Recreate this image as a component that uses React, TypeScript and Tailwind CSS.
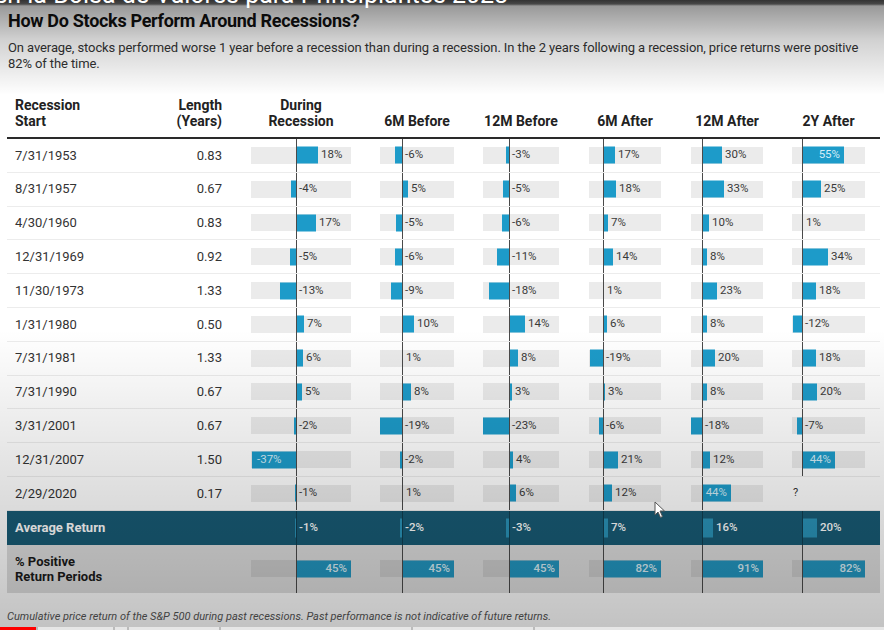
import React from 'react';

// Interfaces
interface IColumn {
  title: string[];
  cls: string;
  width: number;
  zero: number;
  scale: number;
}

interface IRecession {
  start: string;
  length: string;
  values: (number | null)[];
  inside?: number[];
}

interface IBarCellProps {
  column: IColumn;
  value: number | null;
  inside?: boolean;
  variant: 'row' | 'average' | 'positive';
}

// Constants
const columns: IColumn[] = [
  { title: ['During', 'Recession'], cls: 'ml-[29px] w-[100px]', width: 100, zero: 45, scale: 1.2 },
  { title: ['6M Before'], cls: 'ml-[29px] w-[74px]', width: 74, zero: 22, scale: 1.17 },
  { title: ['12M Before'], cls: 'ml-[29px] w-[76px]', width: 76, zero: 26, scale: 1.12 },
  { title: ['6M After'], cls: 'ml-[30px] w-[72px]', width: 72, zero: 14, scale: 0.71 },
  { title: ['12M After'], cls: 'ml-[30px] w-[72px]', width: 72, zero: 11, scale: 0.67 },
  { title: ['2Y After'], cls: 'ml-[29px] w-[73px]', width: 73, zero: 10, scale: 0.76 },
];

const recessions: IRecession[] = [
  { start: '7/31/1953', length: '0.83', values: [18, -6, -3, 17, 30, 55], inside: [5] },
  { start: '8/31/1957', length: '0.67', values: [-4, 5, -5, 18, 33, 25] },
  { start: '4/30/1960', length: '0.83', values: [17, -5, -6, 7, 10, 1] },
  { start: '12/31/1969', length: '0.92', values: [-5, -6, -11, 14, 8, 34] },
  { start: '11/30/1973', length: '1.33', values: [-13, -9, -18, 1, 23, 18] },
  { start: '1/31/1980', length: '0.50', values: [7, 10, 14, 6, 8, -12] },
  { start: '7/31/1981', length: '1.33', values: [6, 1, 8, -19, 20, 18] },
  { start: '7/31/1990', length: '0.67', values: [5, 8, 3, 3, 8, 20] },
  { start: '3/31/2001', length: '0.67', values: [-2, -19, -23, -6, -18, -7] },
  { start: '12/31/2007', length: '1.50', values: [-37, -2, 4, 21, 12, 44], inside: [0, 5] },
  { start: '2/29/2020', length: '0.17', values: [-1, 1, 6, 12, 44, null], inside: [4] },
];

const averages = [-1, -2, -3, 7, 16, 20];
const positives = [45, 45, 45, 82, 91, 82];

const BarCell: React.FunctionComponent<IBarCellProps> = ({
  column,
  value,
  inside,
  variant,
}): JSX.Element => {
  if (value === null) {
    return (
      <div className={`relative flex h-full items-center ${column.cls}`}>
        <span className="pl-px text-[11px] text-[#333]">?</span>
      </div>
    );
  }

  const size = Math.max(1, Math.round(Math.abs(value) * column.scale));
  let left = value >= 0 ? column.zero : Math.max(0, column.zero - size);
  let width = value >= 0 ? Math.min(size, column.width - column.zero) : column.zero - left;

  if (variant === 'positive') {
    left = column.zero;
    width = column.width - column.zero;
  }

  let labelStyle: React.CSSProperties;
  if (variant === 'positive' || (inside && value > 0)) {
    labelStyle = { right: column.width - (left + width) + 4 };
  } else if (inside) {
    labelStyle = { left: left + 5 };
  } else if (value > 0) {
    labelStyle = { left: column.zero + width + 3 };
  } else {
    labelStyle = { left: column.zero + 3 };
  }

  const labelColor =
    variant === 'average'
      ? 'font-medium text-white'
      : variant === 'positive'
        ? 'font-medium text-[#d9eef6]'
        : inside
          ? 'text-[#d4edf7]'
          : 'text-[#3a3a3a]';

  return (
    <div className={`relative flex h-full items-center ${column.cls}`}>
      {/* Track */}
      {variant !== 'average' && (
        <div
          className={`h-[17px] w-full ${variant === 'positive' ? 'bg-[#cdcdcd]' : 'bg-[#ebebeb]'}`}
        />
      )}

      {/* Bar */}
      <div
        className={`absolute top-1/2 -translate-y-1/2 ${
          variant === 'average'
            ? 'h-[19px] bg-[#2a93b8]'
            : variant === 'positive'
              ? 'h-[17px] bg-[#2396c0]'
              : 'h-[17px] bg-[#1d9bc9]'
        }`}
        style={{ left, width }}
      />

      {/* Zero line */}
      <div
        className={`absolute inset-y-0 w-px ${variant === 'average' ? 'bg-[#0f3e50]' : 'bg-[#4a4a4a]'}`}
        style={{ left: column.zero }}
      />

      {/* Label */}
      <span
        className={`absolute top-1/2 -translate-y-1/2 text-[11.5px] leading-none ${labelColor}`}
        style={labelStyle}
      >
        {value}%
      </span>
    </div>
  );
};

const App: React.FunctionComponent = (): JSX.Element => {
  return (
    <div className="relative h-[630px] w-[884px] overflow-hidden bg-white font-['Roboto',sans-serif] text-[#222]">
      <div className="pl-[7px] pr-[4px]">
        {/* Title */}
        <h1 className="pl-[1px] pt-[10px] text-[18px] font-bold leading-[22px] tracking-[-0.3px] text-[#111]">
          How Do Stocks Perform Around Recessions?
        </h1>
        <p className="mt-[8px] pl-[1px] text-[13px] leading-[16px] tracking-[-0.1px] text-[#333]">
          On average, stocks performed worse 1 year before a recession than during a recession. In the 2 years following a recession, price returns were positive 82% of the time.
        </p>

        {/* Table header */}
        <div className="mt-[25px] flex h-[42px] items-end border-b-2 border-[#2a2a2a] pb-[8px] text-[14px] font-bold leading-[16px] text-[#222]">
          <div className="w-[143px] pl-[8px]">
            Recession
            <br />
            Start
          </div>
          <div className="w-[72px] text-right">
            Length
            <br />
            (Years)
          </div>
          {columns.map((column) => (
            <div className={`text-center ${column.cls}`} key={column.title.join(' ')}>
              {column.title.map((line) => (
                <div className="whitespace-nowrap" key={line}>
                  {line}
                </div>
              ))}
            </div>
          ))}
        </div>

        {/* Recession rows */}
        {recessions.map((recession) => (
          <div
            className="flex h-[33.8px] items-center border-b border-[#ececec] text-[13px] text-[#333]"
            key={recession.start}
          >
            <div className="w-[143px] pl-[8px]">{recession.start}</div>
            <div className="w-[72px] text-right">{recession.length}</div>
            {columns.map((column, index) => (
              <BarCell
                column={column}
                value={recession.values[index]}
                inside={recession.inside?.includes(index)}
                variant="row"
                key={column.title.join(' ')}
              />
            ))}
          </div>
        ))}

        {/* Average Return */}
        <div className="flex h-[34px] items-center bg-[#185b75] text-[13px]">
          <div className="w-[215px] pl-[8px] font-bold text-white">Average Return</div>
          {columns.map((column, index) => (
            <BarCell column={column} value={averages[index]} variant="average" key={column.title.join(' ')} />
          ))}
        </div>

        {/* % Positive */}
        <div className="flex h-[48px] items-center bg-[#dedede] text-[13px]">
          <div className="w-[215px] pl-[8px] font-bold leading-[15px] text-[#1a1a1a]">
            % Positive
            <br />
            Return Periods
          </div>
          {columns.map((column, index) => (
            <BarCell column={column} value={positives[index]} variant="positive" key={column.title.join(' ')} />
          ))}
        </div>

        {/* Footnote */}
        <p className="mt-[17px] text-[11px] italic leading-[14px] text-[#555]">
          Cumulative price return of the S&amp;P 500 during past recessions. Past performance is not indicative of future returns.
        </p>
      </div>

      {/* Video overlay: top gradient and title */}
      <div className="pointer-events-none absolute inset-x-0 top-0 h-[100px] bg-[linear-gradient(to_bottom,rgba(0,0,0,0.8)_0px,rgba(0,0,0,0.72)_4px,rgba(0,0,0,0.4)_6px,rgba(0,0,0,0.18)_40px,rgba(0,0,0,0)_95px)]">
        <div className="absolute left-[-6px] top-[-24px] whitespace-nowrap text-[25px] text-white">
          en la Bolsa de Valores para Principiantes 2023
        </div>
      </div>

      {/* Video overlay: bottom gradient */}
      <div className="pointer-events-none absolute inset-x-0 bottom-0 h-[300px] bg-[linear-gradient(to_bottom,rgba(0,0,0,0),rgba(0,0,0,0.24))]" />

      {/* Cursor */}
      <svg className="pointer-events-none absolute left-[654px] top-[501px]" width="12" height="18" viewBox="0 0 12 18">
        <path d="M1 1 L1 14 L4 11 L6.5 16.5 L8.5 15.5 L6 10 L10.5 10 Z" fill="#fff" stroke="#555" strokeWidth="1" strokeLinejoin="round" />
      </svg>

      {/* Progress bar */}
      <div className="absolute inset-x-0 bottom-0 flex h-[3px] gap-[2px] bg-[#bbb]">
        <div className="w-[36px] bg-[#f00]" />
        <div className="w-[75px] bg-[#e6e6e6]" />
        <div className="w-[12px] bg-[#e6e6e6]" />
        <div className="w-[90px] bg-[#e6e6e6]" />
        <div className="w-[190px] bg-[#e6e6e6]" />
        <div className="w-[120px] bg-[#e6e6e6]" />
        <div className="flex-1 bg-[#e6e6e6]" />
      </div>
    </div>
  );
};

export default App;
